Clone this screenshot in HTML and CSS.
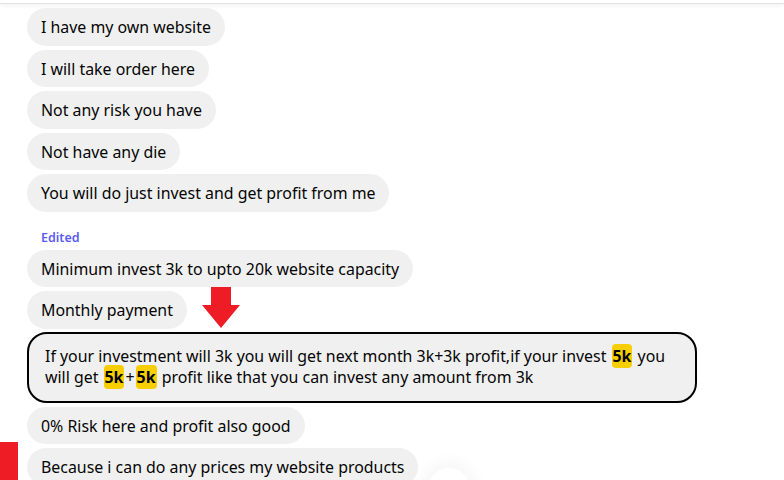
FILE: index.html
```html
<!DOCTYPE html>
<html lang="en">
<head>
  <meta charset="UTF-8" />
  <meta name="viewport" content="width=device-width, initial-scale=1" />
  <title>Chat</title>
  <link rel="stylesheet" href="styles.css">
</head>
<body>

<div class="topbar"></div>

<div class="thread">
  <div class="bubble">I have my own website</div>
  <div class="bubble">I will take order here</div>
  <div class="bubble">Not any risk you have</div>
  <div class="bubble">Not have any die</div>
  <div class="bubble">You will do just invest and get profit from me</div>

  <div class="edited">Edited</div>
  <div class="bubble">Minimum invest 3k to upto 20k website capacity</div>
  <div class="bubble">Monthly payment</div>
  <div class="bubble marked">If your investment will 3k you will get next month 3k+3k profit,if your invest <mark>5k</mark> you will get <mark>5k</mark>+<mark>5k</mark> profit like that you can invest any amount from 3k</div>
  <div class="bubble">0% Risk here and profit also good</div>
  <div class="bubble">Because i can do any prices my website products</div>
</div>

<!-- annotations -->
<svg class="arrow" width="40" height="42" viewBox="0 0 40 42">
  <path d="M9 0 H29 V18 H38 L19 41 L0 18 H9 Z" fill="#ee1c25" />
</svg>
<div class="redmark"></div>
<div class="scroll-btn"></div>

</body>
</html>
```

FILE: styles.css
```css
* { box-sizing: border-box; }
html, body { height: 100%; }
body {
  margin: 0;
  background: #fff;
  font-family: "Noto Sans", "Open Sans", sans-serif;
  font-size: 15.9px;
  color: #050505;
  overflow: hidden;
  position: relative;
}
.topbar {
  height: 4px;
  border-bottom: 1px solid #e2e2e2;
  box-shadow: 0 2px 4px rgba(0,0,0,0.05);
}
.thread {
  display: flex;
  flex-direction: column;
  align-items: flex-start;
  gap: 4px;
  padding: 4px 0 0 27px;
}
.bubble {
  background: #f0f0f0;
  border-radius: 19px;
  padding: 9px 14px 7px;
  line-height: 21.5px;
}
.edited {
  margin: 14px 0 0 14px;
  font-size: 12.5px;
  font-weight: 600;
  color: #5b5bf7;
  line-height: 16px;
}
.marked {
  width: 670px;
  margin-top: -1px;
  border: 2px solid #000;
  border-radius: 20px;
  padding: 12px 16px 12px;
}
mark {
  background: #f7cf00;
  color: #000;
  font-weight: 700;
  border-radius: 4px;
  padding: 1px 1px;
  margin: 0 1px;
}
.arrow {
  position: absolute;
  left: 202px;
  top: 287px;
}
.redmark {
  position: absolute;
  left: 0;
  top: 442px;
  width: 18px;
  height: 40px;
  background: #ee1c25;
}
.scroll-btn {
  position: absolute;
  left: 428px;
  top: 468px;
  width: 42px;
  height: 42px;
  border-radius: 50%;
  background: #fff;
  box-shadow: 0 0 14px 8px rgba(0,0,0,0.03);
}
```
